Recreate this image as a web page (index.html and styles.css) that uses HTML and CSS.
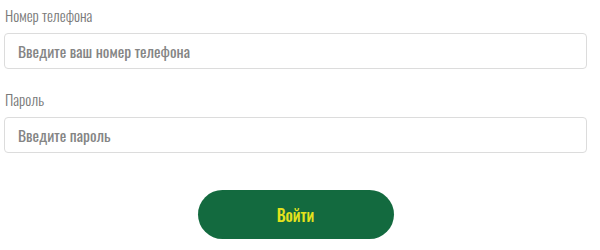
FILE: index.html
```html
<!DOCTYPE html>
<html lang="ru">
  <head>
    <meta charset="UTF-8" />
    <meta name="viewport" content="width=device-width, initial-scale=1.0" />
    <title>Вход</title>
    <link rel="stylesheet" href="styles.css">
  </head>
  <body>
    <form class="login">
      <label class="field">
        <span class="label">Номер телефона</span>
        <input class="input" type="tel" placeholder="Введите ваш номер телефона" />
      </label>
      <label class="field">
        <span class="label">Пароль</span>
        <input class="input" type="password" placeholder="Введите пароль" />
      </label>
      <div class="actions">
        <button class="btn" type="button">Войти</button>
      </div>
    </form>
  </body>
</html>
```

FILE: styles.css
```css
* {
  margin: 0;
  padding: 0;
  box-sizing: border-box;
}
body {
  background: #fff;
  font-family: "Oswald", "Roboto Condensed", "Liberation Sans", sans-serif;
}
.login {
  width: 583px;
  margin-left: 4px;
  padding-top: 4px;
}
.field {
  display: block;
  margin-bottom: 19px;
  .label {
    display: block;
    padding-left: 1px;
    font-size: 15px;
    font-weight: 300;
    line-height: 22px;
    color: #7a7a7a;
    margin-bottom: 7px;
  }
}
.input {
  display: block;
  width: 100%;
  height: 36px;
  border: 1px solid #dcdcdc;
  border-radius: 4px;
  padding: 0 13px;
  font-family: inherit;
  font-size: 15.5px;
  font-weight: 400;
  color: #555;
  outline: none;
  &::placeholder {
    color: #858585;
  }
}
.actions {
  display: flex;
  justify-content: center;
  padding-top: 18px;
}
.btn {
  width: 196px;
  height: 49px;
  border: none;
  border-radius: 25px;
  background: #136a3f;
  color: #e4e21c;
  font-family: inherit;
  font-size: 16px;
  font-weight: 500;
  cursor: pointer;
}
```
